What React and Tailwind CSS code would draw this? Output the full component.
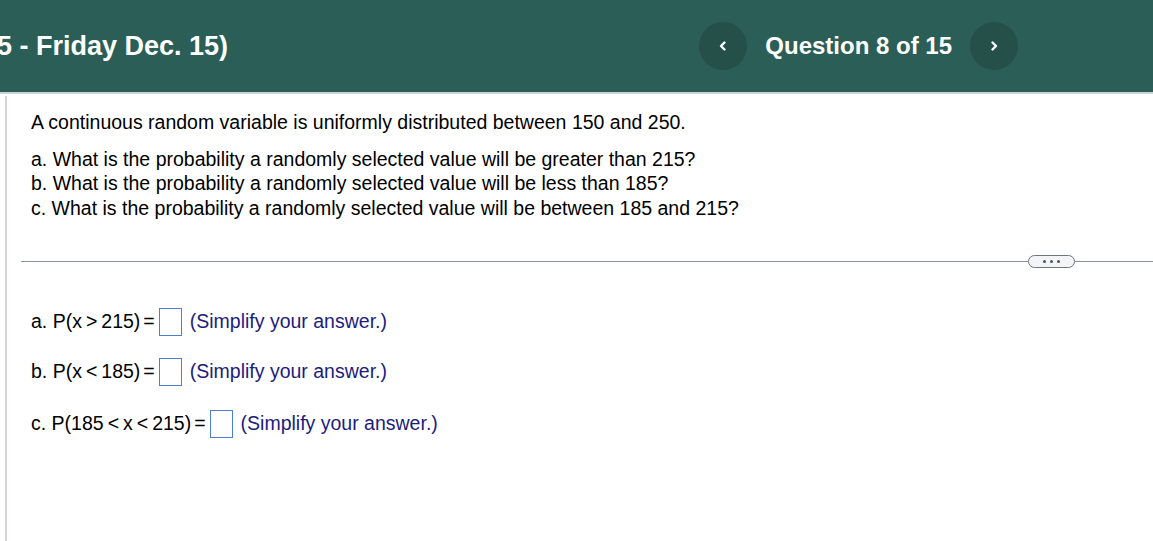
export default function App() {
  const answers = [
    { label: 'a. P(x', op: '>', rest: '215)' },
    { label: 'b. P(x', op: '<', rest: '185)' },
  ];

  return (
    <div className="w-[1153px] h-[541px] bg-white overflow-hidden font-['Liberation_Sans',Arial,sans-serif] text-black">
      {/* Header bar */}
      <div className="h-[94px] bg-[#2a5e57] flex items-center border-b-2 border-[#c9d6d9]">
        <div className="text-white font-bold text-[27px] ml-[-3px] pt-[1px] flex-1 whitespace-nowrap">5 - Friday Dec. 15)</div>
        <div className="flex items-center mr-[135px]">
          <button className="w-[48px] h-[48px] rounded-full bg-[#255049] flex items-center justify-center">
            <svg width="12" height="12" viewBox="0 0 12 12" fill="none" stroke="white" strokeWidth="2.4" strokeLinecap="round" strokeLinejoin="round">
              <path d="M7.5 2.5 L4 6 L7.5 9.5" />
            </svg>
          </button>
          <div className="text-white font-bold text-[24px] mx-[18px] whitespace-nowrap">Question 8 of 15</div>
          <button className="w-[48px] h-[48px] rounded-full bg-[#255049] flex items-center justify-center">
            <svg width="12" height="12" viewBox="0 0 12 12" fill="none" stroke="white" strokeWidth="2.4" strokeLinecap="round" strokeLinejoin="round">
              <path d="M4.5 2.5 L8 6 L4.5 9.5" />
            </svg>
          </button>
        </div>
      </div>

      {/* Body */}
      <div className="flex h-[447px]">
        <div className="w-[5px]" />
        <div className="w-[2px] bg-[#d3d3e3] mt-[2px]" />
        <div className="flex-1">
          <div className="pl-[24px] pt-[16px] text-[19.5px] leading-[24.5px]">
            <p>A continuous random variable is uniformly distributed between 150 and 250.</p>
            <div className="mt-[12px]">
              <p>a. What is the probability a randomly selected value will be greater than 215?</p>
              <p>b. What is the probability a randomly selected value will be less than 185?</p>
              <p>c. What is the probability a randomly selected value will be between 185 and 215?</p>
            </div>
          </div>

          {/* Divider with pill */}
          <div className="flex items-center mt-[35px] ml-[14px]">
            <div className="flex-1 h-[1px] bg-[#8a9399]" />
            <div className="w-[47px] h-[13px] rounded-full border border-[#6b7680] bg-[#f2f4f7] flex items-center justify-center gap-[4px]">
              <span className="w-[3px] h-[3px] rounded-full bg-[#4a5560]" />
              <span className="w-[3px] h-[3px] rounded-full bg-[#4a5560]" />
              <span className="w-[3px] h-[3px] rounded-full bg-[#4a5560]" />
            </div>
            <div className="w-[78px] h-[1px] bg-[#8a9399]" />
          </div>

          {/* Answers */}
          <div className="pl-[24px] pt-[40px] text-[19.5px] flex flex-col gap-[22px]">
            {answers.map((a) => (
              <div key={a.label} className="flex items-center h-[28px]">
                <span className="whitespace-nowrap">
                  {a.label}
                  <span className="mx-[4px]">{a.op}</span>
                  {a.rest}
                  <span className="ml-[3px]">=</span>
                </span>
                <span className="ml-[4px] w-[23px] h-[28px] border border-[#4a7fd4] bg-white" />
                <span className="ml-[8px] text-[#1c1c7e] whitespace-nowrap">(Simplify your answer.)</span>
              </div>
            ))}
            <div className="flex items-center h-[28px] mt-[2px]">
              <span className="whitespace-nowrap">
                c. P(185<span className="mx-[4px]">&lt;</span>x<span className="mx-[4px]">&lt;</span>215)<span className="ml-[3px]">=</span>
              </span>
              <span className="ml-[4px] w-[23px] h-[28px] border border-[#4a7fd4] bg-white" />
              <span className="ml-[8px] text-[#1c1c7e] whitespace-nowrap">(Simplify your answer.)</span>
            </div>
          </div>
        </div>
      </div>
    </div>
  );
}
